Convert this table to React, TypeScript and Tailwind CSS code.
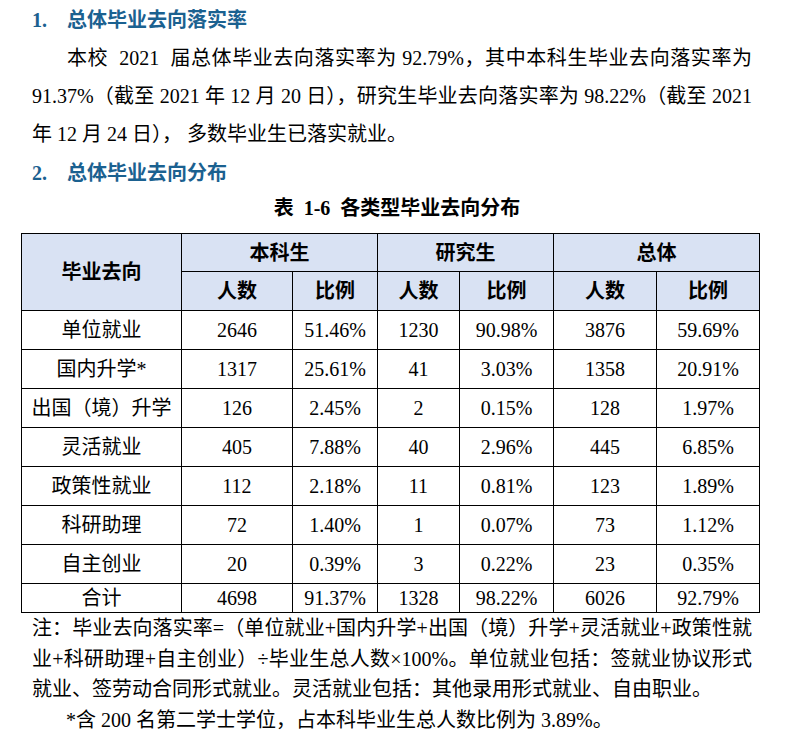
const rows = [
    ['单位就业', '2646', '51.46%', '1230', '90.98%', '3876', '59.69%'],
    ['国内升学*', '1317', '25.61%', '41', '3.03%', '1358', '20.91%'],
    ['出国（境）升学', '126', '2.45%', '2', '0.15%', '128', '1.97%'],
    ['灵活就业', '405', '7.88%', '40', '2.96%', '445', '6.85%'],
    ['政策性就业', '112', '2.18%', '11', '0.81%', '123', '1.89%'],
    ['科研助理', '72', '1.40%', '1', '0.07%', '73', '1.12%'],
    ['自主创业', '20', '0.39%', '3', '0.22%', '23', '0.35%'],
]

const total = ['合计', '4698', '91.37%', '1328', '98.22%', '6026', '92.79%']

function Heading({ num, text, className }: { num: string, text: string, className?: string }) {
    return (
        <div className={`flex h-[38px] items-center pl-[32px] text-[20px] font-bold text-[#1b6190] ${className ?? ''}`}>
            <span className="w-[35px]">{num}</span>
            <span>{text}</span>
        </div>
    )
}

export default function App() {
    const th = 'border border-black bg-[#d9e2f3] font-bold text-center'
    const td = 'border border-black text-center'
    const line = 'whitespace-nowrap text-justify [text-align-last:justify]'

    return (
        <div className="w-[794px] h-[739px] overflow-hidden bg-white text-black font-['Liberation_Serif','Noto_Sans_CJK_SC',serif]">
            <Heading num="1." text="总体毕业去向落实率" className="h-[39px]" />

            <div className="pl-[32px] pr-[42px] text-[20px] leading-[38px]">
                <div className={`pl-[35px] ${line}`}>
                    本校&nbsp; 2021&nbsp; 届总体毕业去向落实率为 92.79%，其中本科生毕业去向落实率为
                </div>
                <div className={line}>
                    91.37%（截至 2021 年 12 月 20 日），研究生毕业去向落实率为 98.22%（截至 2021
                </div>
                <div>年 12 月 24 日），&nbsp;多数毕业生已落实就业。</div>
            </div>

            <Heading num="2." text="总体毕业去向分布" className="mt-[1px]" />

            <div className="h-[32px] text-center text-[20px] font-bold leading-[32px]">
                表&nbsp;&nbsp;1-6&nbsp;&nbsp;各类型毕业去向分布
            </div>

            <table className="ml-[21px] mt-[9px] w-[738px] table-fixed border-collapse text-[20px]">
                <colgroup>
                    <col className="w-[160px]" />
                    <col className="w-[111px]" />
                    <col className="w-[85px]" />
                    <col className="w-[82px]" />
                    <col className="w-[94px]" />
                    <col className="w-[103px]" />
                    <col className="w-[103px]" />
                </colgroup>
                <thead>
                    <tr className="h-[38px]">
                        <th rowSpan={2} className={th}>毕业去向</th>
                        <th colSpan={2} className={th}>本科生</th>
                        <th colSpan={2} className={th}>研究生</th>
                        <th colSpan={2} className={th}>总体</th>
                    </tr>
                    <tr className="h-[39px]">
                        <th className={th}>人数</th>
                        <th className={th}>比例</th>
                        <th className={th}>人数</th>
                        <th className={th}>比例</th>
                        <th className={th}>人数</th>
                        <th className={th}>比例</th>
                    </tr>
                </thead>
                <tbody>
                    {rows.map(r => (
                        <tr key={r[0]} className="h-[39px]">
                            {r.map((c, i) => <td key={i} className={td}>{c}</td>)}
                        </tr>
                    ))}
                    <tr className="h-[29px]">
                        {total.map((c, i) => <td key={i} className={`${td} leading-[26px]`}>{c}</td>)}
                    </tr>
                </tbody>
            </table>

            <div className="pl-[32px] pr-[42px] text-[20px] leading-[30.5px]">
                <div className={line}>
                    注：毕业去向落实率=（单位就业+国内升学+出国（境）升学+灵活就业+政策性就
                </div>
                <div className={line}>
                    业+科研助理+自主创业）÷毕业生总人数×100%。单位就业包括：签就业协议形式
                </div>
                <div>就业、签劳动合同形式就业。灵活就业包括：其他录用形式就业、自由职业。</div>
                <div className="pl-[34px]">*含 200 名第二学士学位，占本科毕业生总人数比例为 3.89%。</div>
            </div>
        </div>
    )
}
